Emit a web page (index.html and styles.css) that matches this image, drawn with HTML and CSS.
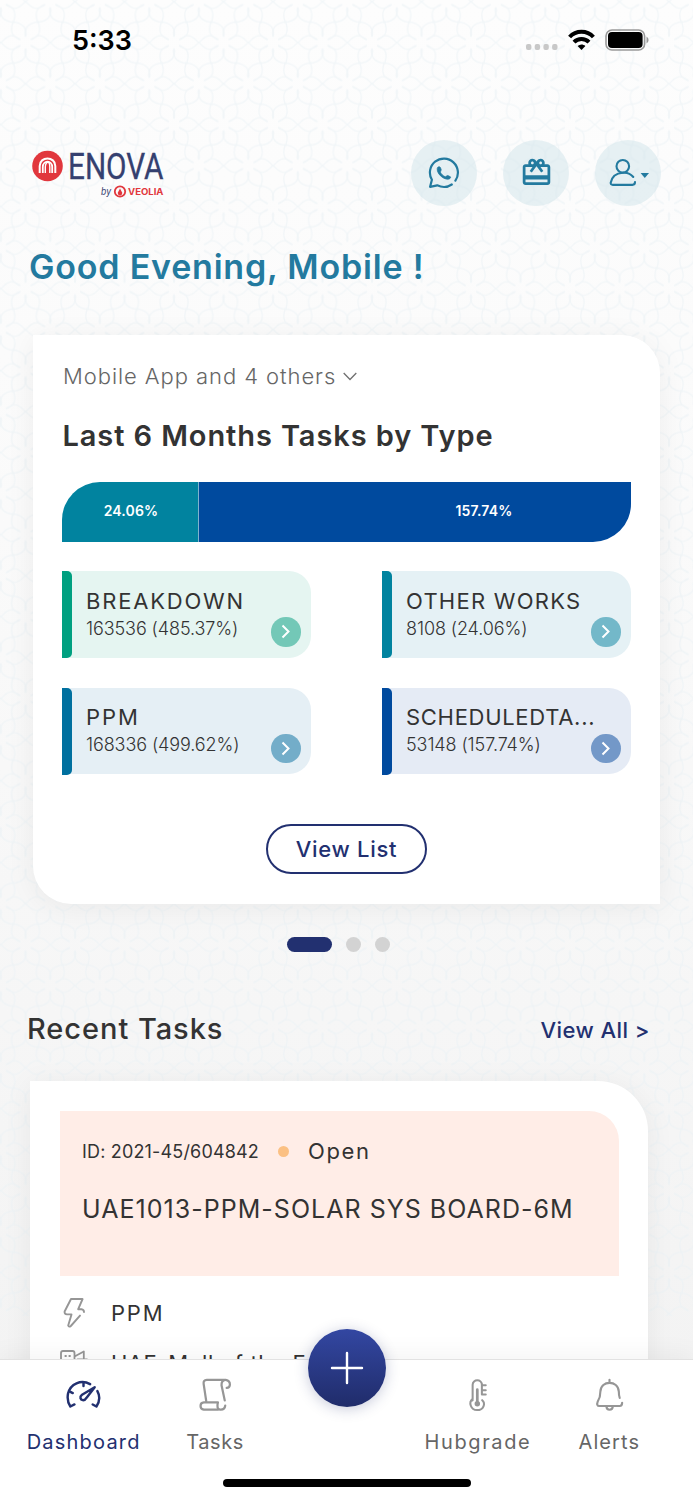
FILE: index.html
```html
<!DOCTYPE html>
<html lang="en">
<head>
    <meta charset="UTF-8">
    <meta name="viewport" content="width=device-width, initial-scale=1.0">
    <title>Enova Dashboard</title>
    <link rel="stylesheet" href="styles.css">
</head>
<body>
    <div class="screen">
        <svg class="pattern" width="693" height="1316">
            <defs>
                <path id="petal" d="M5 -3 C9 -3 9 -6.8 13.5 -6.8 C19 -6.8 21 -3 24.7 0 C21 3 19 6.8 13.5 6.8 C9 6.8 9 3 5 3"/>
                <g id="flower">
                    <use href="#petal"/>
                    <use href="#petal" transform="rotate(59)"/>
                    <use href="#petal" transform="rotate(121)"/>
                    <use href="#petal" transform="rotate(180)"/>
                    <use href="#petal" transform="rotate(239)"/>
                    <use href="#petal" transform="rotate(301)"/>
                </g>
                <pattern id="tiles" x="0.8" y="1.6" width="49.5" height="82" patternUnits="userSpaceOnUse">
                    <g class="lines">
                        <use href="#flower"/>
                        <use href="#flower" x="49.5"/>
                        <use href="#flower" y="82"/>
                        <use href="#flower" x="49.5" y="82"/>
                        <use href="#flower" x="24.75" y="41"/>
                    </g>
                </pattern>
            </defs>
            <rect width="693" height="1316" fill="url(#tiles)"/>
        </svg>

        <div class="status-bar">
            <span class="time">5:33</span>
            <div class="status-icons">
                <svg width="32" height="6" viewBox="0 0 32 6" fill="#c8c8c8">
                    <rect width="5.4" height="6" rx="2"/>
                    <rect x="8.7" width="5.4" height="6" rx="2"/>
                    <rect x="17.4" width="5.4" height="6" rx="2"/>
                    <rect x="26.1" width="5.4" height="6" rx="2"/>
                </svg>
                <svg class="wifi" width="27" height="22" viewBox="0 0 27 22" fill="none" stroke="#000" stroke-width="4">
                    <path d="M1.6 8 C8 0.9 19 0.9 25.4 8"/>
                    <path d="M6 13.2 C10 9 17 9 21 13.2"/>
                    <path d="M9.6 17 C12 15 15 15 17.4 17 L13.5 21 Z" fill="#000" stroke="none"/>
                </svg>
                <svg class="battery" width="44" height="22" viewBox="0 0 44 22">
                    <rect x="1" y="1" width="38.6" height="20" rx="6" fill="none" stroke="#999" stroke-width="1.6"/>
                    <rect x="3" y="3" width="34.6" height="16" rx="4" fill="#000"/>
                    <path d="M41.5 7.5 Q43.6 8.6 43.6 11 Q43.6 13.4 41.5 14.5 Z" fill="#999"/>
                </svg>
            </div>
        </div>

        <div class="header">
            <svg class="logo" width="140" height="60" viewBox="0 -10 140 60">
                <circle cx="15.5" cy="16" r="15.3" fill="#e1373d"/>
                <g fill="none" stroke="#fff">
                    <path d="M7.7 23 V16 C7.7 6 23.3 6 23.3 16 V23" stroke-width="2"/>
                    <path d="M10.8 23 V17 C10.8 10 20.2 10 20.2 17 V23" stroke-width="1.8"/>
                    <path d="M13.3 23 V17 Q13.6 12.5 16 12 Q17.8 12.5 17.8 17 V23" stroke-width="1.4"/>
                </g>
                <text class="logo-name" x="36" y="28.5" textLength="95.5" lengthAdjust="spacingAndGlyphs">ENOVA</text>
                <text class="logo-by" x="69" y="45" textLength="10" lengthAdjust="spacingAndGlyphs">by</text>
                <circle cx="88" cy="41.5" r="5.2" fill="none" stroke="#e1373d" stroke-width="1.8"/>
                <path d="M88 38.5 L90 42.3 A2.2 2.2 0 1 1 86 42.3 Z" fill="#e1373d"/>
                <text class="logo-veolia" x="96" y="44.7" textLength="35.5" lengthAdjust="spacingAndGlyphs">VEOLIA</text>
            </svg>
            <div class="header-buttons">
                <div class="round-btn">
                    <svg width="32" height="32" viewBox="0 0 32 32" fill="none" stroke="#237a9f" stroke-width="2.2" stroke-linecap="round" stroke-linejoin="round">
                        <path d="M27.4 23.6 A14 14 0 1 0 3.9 22.8 L2.1 29.8 L9.2 28.3 C14 30.6 19.5 30.4 23.8 27.5"/>
                        <path d="M9.6 10.5 C10.4 9.2 11.9 9.4 12.5 10.8 L13.2 12.8 C13.2 14 12.2 14.4 12.4 15.2 C13.4 17.3 15.2 19 17.3 19.8 C18.3 19.7 18.8 18.4 19.9 18.6 L22.4 19.8 C23.2 21 21.4 22.2 19.9 22.2 C14.3 22 9 16.5 9.2 12 Z" fill="#237a9f" stroke="#237a9f" stroke-width="0.8"/>
                    </svg>
                </div>
                <div class="round-btn">
                    <svg width="33" height="33" viewBox="0 0 24 24" fill="#237a9f">
                        <path d="M20 6h-2.18c.11-.31.18-.65.18-1 0-1.66-1.34-3-3-3-1.05 0-1.96.54-2.5 1.35l-.5.67-.5-.68C10.96 2.54 10.05 2 9 2 7.34 2 6 3.34 6 5c0 .35.07.69.18 1H4c-1.11 0-1.99.89-1.99 2L2 19c0 1.11.89 2 2 2h16c1.11 0 2-.89 2-2V8c0-1.11-.89-2-2-2zm-5-2c.55 0 1 .45 1 1s-.45 1-1 1-1-.45-1-1 .45-1 1-1zM9 4c.55 0 1 .45 1 1s-.45 1-1 1-1-.45-1-1 .45-1 1-1zm11 15H4v-2h16v2zm0-5H4V8h5.08L7 10.83 8.62 12 11 8.76l1-1.36 1 1.36L15.38 12 17 10.83 14.92 8H20v6z"/>
                    </svg>
                </div>
                <div class="round-btn">
                    <svg width="42" height="30" viewBox="0 0 42 30" fill="none" stroke="#237a9f" stroke-width="2.1" stroke-linecap="round">
                        <circle cx="15.8" cy="8.3" r="6.3"/>
                        <path d="M26.3 19 C23.5 15.5 20 14.3 15.8 14.8 C8.5 15.3 4.7 19.5 3.7 24.8 Q3.6 26.9 5.8 26.9 H25.4 Q28 26.9 28 24.1"/>
                        <path d="M33.6 15 H42 L37.8 20 Z" fill="#237a9f" stroke="none"/>
                    </svg>
                </div>
            </div>
        </div>

        <h1 class="greeting">Good Evening, Mobile !</h1>

        <div class="card tasks-card">
            <div class="site-select">
                <span class="site-name">Mobile App and 4 others</span>
                <svg width="14" height="9" viewBox="0 0 14 9" fill="none" stroke="#707070" stroke-width="1.3">
                    <path d="M0.7 1 L7 7.5 L13.3 1"/>
                </svg>
            </div>
            <h2 class="card-title">Last 6 Months Tasks by Type</h2>
            <div class="bar">
                <div class="bar-part teal"><span>24.06%</span></div>
                <div class="bar-part blue"><span>157.74%</span></div>
            </div>
            <div class="types">
                <div class="type breakdown">
                    <div class="type-name n1">BREAKDOWN</div>
                    <div class="type-value">163536 (485.37%)</div>
                    <div class="arrow"><svg width="9" height="15" viewBox="0 0 9 15"><path d="M1.5 1.5 L7.5 7.5 L1.5 13.5"/></svg></div>
                </div>
                <div class="type other">
                    <div class="type-name n2">OTHER WORKS</div>
                    <div class="type-value">8108 (24.06%)</div>
                    <div class="arrow"><svg width="9" height="15" viewBox="0 0 9 15"><path d="M1.5 1.5 L7.5 7.5 L1.5 13.5"/></svg></div>
                </div>
                <div class="type ppm">
                    <div class="type-name n3">PPM</div>
                    <div class="type-value">168336 (499.62%)</div>
                    <div class="arrow"><svg width="9" height="15" viewBox="0 0 9 15"><path d="M1.5 1.5 L7.5 7.5 L1.5 13.5"/></svg></div>
                </div>
                <div class="type scheduled">
                    <div class="type-name n4">SCHEDULEDTA...</div>
                    <div class="type-value">53148 (157.74%)</div>
                    <div class="arrow"><svg width="9" height="15" viewBox="0 0 9 15"><path d="M1.5 1.5 L7.5 7.5 L1.5 13.5"/></svg></div>
                </div>
            </div>
            <button class="view-list">View List</button>
        </div>

        <div class="dots">
            <span class="dot active"></span>
            <span class="dot"></span>
            <span class="dot"></span>
        </div>

        <div class="section-head">
            <h2 class="section-title">Recent Tasks</h2>
            <a class="view-all">View All &gt;</a>
        </div>

        <div class="card recent-card">
            <div class="task-box">
                <div class="task-meta">
                    <span class="task-id">ID: 2021-45/604842</span>
                    <span class="task-dot"></span>
                    <span class="task-status">Open</span>
                </div>
                <div class="task-name">UAE1013-PPM-SOLAR SYS BOARD-6M</div>
            </div>
            <div class="task-row">
                <svg width="30" height="32" viewBox="0 0 30 32" fill="none" stroke="#969696" stroke-width="1.9" stroke-linecap="round" stroke-linejoin="round">
                    <path d="M24 15 Q24 12.5 21.5 12.2 H18.2 L22.6 2 H11 L4.6 14.5 Q4.3 17.2 7 17.4 H11.5 L8.2 28.5 Q9 30.5 10.8 29 L20 18.6"/>
                </svg>
                <span class="row-ppm">PPM</span>
            </div>
            <div class="task-row">
                <svg width="30" height="32" viewBox="0 0 30 32" fill="none" stroke="#969696" stroke-width="1.8" stroke-linecap="round" stroke-linejoin="round">
                    <path d="M1 24 V6 Q1 4 3 4 H12.5 Q14.5 4 14.5 6 V24 M14.5 9.5 L23.8 4.5 V11 M17.5 12.3 H27 V24"/>
                    <path d="M5.3 9 H6 M9.3 9 H10 M5.3 14 H6 M9.3 14 H10"/>
                </svg>
                <span class="row-place">UAE-Mall of the Emirates</span>
            </div>
        </div>

        <div class="tab-bar">
            <div class="tab active">
                <svg width="35" height="35" viewBox="0 0 36 36" fill="none" stroke="#223070" stroke-width="2.5" stroke-linecap="round" stroke-linejoin="round">
                    <path d="M24.8 6.3 C15.5 1.2 4.5 6 2.1 16 C1.2 20.5 2 25.5 4.5 29.3 L8.7 27.2 M32.3 13.5 C35 18.5 34.5 24.5 31.3 29.3 L27.5 27.2"/>
                    <path d="M18 4.5 V8.3 M3.6 13.8 L7 15.5"/>
                    <path d="M29.5 9.5 L16.5 17.2 C13.5 19.5 15 22.5 17.2 22.8 C19 23 20.2 22 21.2 20.2 Z"/>
                </svg>
                <span class="t1">Dashboard</span>
            </div>
            <div class="tab">
                <svg width="35" height="35" viewBox="0 0 36 36" fill="none" stroke="#969696" stroke-width="2.3" stroke-linecap="round" stroke-linejoin="round">
                    <path d="M8.5 24 L5.8 6 Q5.3 2.2 9 2 H28.5 Q33 3 32.8 7 Q32.4 10.3 29.5 10.2 M27.5 23 L24.2 7.5 Q24 2.5 28 2"/>
                    <path d="M21 32.5 H6 Q2.6 32 2.6 28.7 Q2.6 25.2 6 25 H20.5 Q18.8 32 22.5 32.5 Q27.5 33 28 28.5"/>
                </svg>
                <span class="t2">Tasks</span>
            </div>
            <div class="tab-gap"></div>
            <div class="tab">
                <svg width="35" height="35" viewBox="0 0 36 36" fill="none" stroke="#969696" stroke-width="2.1" stroke-linecap="round">
                    <path d="M13 23 V7 C13 0.8 22.5 0.8 22.5 7 V10 M13 21.5 C8.5 25 11 33 17.5 33 C24.5 33 26.5 26 22.8 22.8 M22.5 7.5 H26.5 M22.5 12.5 H26.5 M22.5 17 H26.5 M22.5 6 V17"/>
                    <path d="M17.8 12 V26" stroke-width="2.8"/>
                    <circle cx="17.8" cy="26.5" r="2.8" fill="#969696" stroke="none"/>
                </svg>
                <span class="t3">Hubgrade</span>
            </div>
            <div class="tab">
                <svg width="35" height="35" viewBox="0 0 36 36" fill="none" stroke="#969696" stroke-width="2.2" stroke-linecap="round" stroke-linejoin="round">
                    <path d="M18 1.8 V5 M28.5 20.5 Q27.6 18.5 27.6 14 C27 2 9 2 8.6 14 C8.8 19 7.8 21 5.8 24.5 C4.8 27 5.5 28.8 7.5 28.8 H28.5 Q31 28.8 31 25.5 M14.8 29 C15 33.8 21.2 33.8 21.4 29"/>
                </svg>
                <span class="t4">Alerts</span>
            </div>
            <div class="fab">
                <svg width="34" height="34" viewBox="0 0 34 34" stroke="#fff" stroke-width="2.4" stroke-linecap="round">
                    <path d="M17 2 V32 M2 17 H32"/>
                </svg>
            </div>
            <div class="home-line"></div>
        </div>
    </div>
</body>
</html>
```

FILE: styles.css
```css
* {
    box-sizing: border-box;
}
body {
    margin: 0;
    font-family: Inter, "Open Sans", sans-serif;
    color: #333;
}
h1, h2 {
    margin: 0;
}
svg {
    display: block;
    flex-shrink: 0;
}
span, div, h1, h2, button {
    white-space: nowrap;
}
.screen {
    position: relative;
    width: 693px;
    height: 1500px;
    overflow: hidden;
    background: linear-gradient(#fdfdfd, #fafafa 35%, #f2f2f2);
}
.pattern {
    position: absolute;
    top: 0;
    left: 0;
}
.lines {
    fill: none;
    stroke: #e9f1f5;
    stroke-width: 1.3;
    opacity: 0.55;
}

/* status bar */
.status-bar {
    position: relative;
    display: flex;
    justify-content: space-between;
    height: 79px;
    padding: 0 44px 0 72px;
    align-items: center;
}
.time {
    padding-top: 1px;
    font-size: 27px;
    font-weight: 600;
    color: #000;
}
.status-icons {
    display: flex;
    align-items: center;
}
.status-icons svg:first-child {
    margin-top: 14px;
}
.wifi {
    margin: 0 10px 0 10px;
}

/* header */
.header {
    position: relative;
    display: flex;
    justify-content: space-between;
    padding: 60.5px 32px 0;
}
.logo {
    margin-top: 0.5px;
}
.logo-name {
    font-family: Roboto, sans-serif;
    font-size: 36px;
    fill: #35406f;
    stroke: #35406f;
    stroke-width: 0.3;
}
.logo-by {
    font-size: 10px;
    font-style: italic;
    fill: #35406f;
}
.logo-veolia {
    font-size: 8.5px;
    font-weight: 700;
    fill: #e1373d;
}
.header-buttons {
    display: flex;
    gap: 26px;
}
.round-btn {
    width: 66px;
    height: 66px;
    border-radius: 50%;
    background: rgba(211, 230, 235, 0.55);
    display: flex;
    align-items: center;
    justify-content: center;
}
.greeting {
    position: relative;
    margin: 41.5px 0 0 29px;
    font-size: 34px;
    line-height: 40px;
    font-weight: 600;
    letter-spacing: 0.8px;
    color: #237a9f;
}

/* main card */
.card {
    position: relative;
    background: #fff;
    box-shadow: 0 4px 30px rgba(0, 0, 0, 0.06);
}
.tasks-card {
    width: 627px;
    height: 569px;
    margin: 48px 0 0 33px;
    padding: 26px 29px 0;
    border-radius: 0 38px 0 38px;
}
.site-select {
    display: flex;
    align-items: center;
    gap: 7px;
    height: 30px;
    padding-left: 1px;
    font-size: 22px;
    font-weight: 300;
    letter-spacing: 0.93px;
    color: #666;
}
.card-title {
    margin-top: 25px;
    padding-left: 0.5px;
    font-size: 29px;
    line-height: 40px;
    font-weight: 600;
    letter-spacing: 0.9px;
}
.bar {
    display: flex;
    height: 60px;
    margin-top: 26px;
    border-radius: 38px 0 38px 0;
    overflow: hidden;
}
.bar-part {
    display: flex;
    align-items: center;
    justify-content: center;
    padding-bottom: 3px;
    color: #fff;
    font-size: 14px;
    font-weight: 600;
    letter-spacing: 0.15px;
}
.teal {
    width: 137px;
    padding-left: 2px;
    background: #01839f;
    border-right: 1px solid #7fb3cf;
}
.blue {
    flex: 1;
    padding-left: 138px;
    background: #004a9e;
}
.types {
    display: grid;
    grid-template-columns: 249px 249px;
    justify-content: space-between;
    row-gap: 30px;
    margin-top: 29px;
}
.type {
    position: relative;
    height: 86.5px;
    padding: 14.5px 0 0 24px;
    border-radius: 0 22px 22px 0;
}
.type::before {
    content: "";
    position: absolute;
    left: 0;
    top: 0;
    width: 9.5px;
    height: 87px;
    border-radius: 0 5px 5px 0;
}
.type-name {
    font-size: 22px;
    line-height: 30px;
    font-weight: 400;
}
.n1 { letter-spacing: 1.8px; }
.n2 { letter-spacing: 1.25px; }
.n3 { letter-spacing: 2px; }
.n4 { letter-spacing: 0.7px; }
.type-value {
    font-size: 18px;
    line-height: 26px;
    font-weight: 300;
    letter-spacing: -0.1px;
}
.arrow {
    position: absolute;
    right: 10.5px;
    bottom: 11px;
    width: 29.5px;
    height: 29.5px;
    border-radius: 50%;
    display: flex;
    align-items: center;
    justify-content: center;
}
.arrow path {
    fill: none;
    stroke: #fff;
    stroke-width: 2;
}
.breakdown { background: #e5f5f1; }
.breakdown::before { background: #00a080; }
.breakdown .arrow { background: #73c8b7; }
.other { background: #e5f1f5; }
.other::before { background: #01839f; }
.other .arrow { background: #73b8c9; }
.ppm { background: #e5eff5; }
.ppm::before { background: #00709f; }
.ppm .arrow { background: #73adc9; }
.scheduled { background: #e5ebf5; }
.scheduled::before { background: #004a9e; }
.scheduled .arrow { background: #7398c8; }
.view-list {
    display: block;
    width: 161px;
    height: 50px;
    margin: 50px auto 0;
    padding: 0;
    border: 2px solid #223070;
    border-radius: 25px;
    background: #fff;
    color: #223070;
    font-family: inherit;
    font-size: 22px;
    font-weight: 450;
    letter-spacing: 0.7px;
}

.dots {
    position: relative;
    display: flex;
    gap: 14px;
    margin: 33px 0 0 287px;
}
.dot {
    width: 15px;
    height: 15px;
    border-radius: 8px;
    background: #d3d3d3;
}
.dot.active {
    width: 45px;
    background: #223070;
}

/* recent tasks */
.section-head {
    position: relative;
    display: flex;
    justify-content: space-between;
    align-items: center;
    height: 40px;
    margin-top: 56px;
    padding: 0 43px 0 27px;
}
.section-title {
    font-size: 29px;
    font-weight: 450;
    letter-spacing: 0.95px;
}
.view-all {
    margin-top: 3px;
    font-size: 22px;
    font-weight: 450;
    letter-spacing: 0.45px;
    color: #223070;
}
.recent-card {
    width: 618px;
    height: 500px;
    margin: 33px 0 0 30px;
    padding: 30px 30px 0;
    border-radius: 0 50px 0 0;
}
.task-box {
    width: 558.5px;
    height: 165px;
    padding: 25px 22px 0;
    background: #ffede7;
    border-radius: 0 30px 0 0;
}
.task-meta {
    display: flex;
    align-items: center;
    height: 30px;
}
.task-id {
    font-size: 18px;
    letter-spacing: 0.17px;
}
.task-dot {
    width: 11px;
    height: 11px;
    margin: 0 19px;
    border-radius: 50%;
    background: #fbc083;
}
.task-status {
    font-size: 22px;
    letter-spacing: 1.6px;
}
.task-name {
    margin-top: 23px;
    font-size: 25px;
    line-height: 40px;
    letter-spacing: 1.03px;
}
.task-row {
    display: flex;
    align-items: center;
    gap: 21px;
    height: 50px;
    font-size: 22px;
}
.task-row:nth-child(2) {
    margin-top: 12px;
}
.row-ppm {
    letter-spacing: 1.8px;
}
.row-place {
    letter-spacing: 0.7px;
}

/* bottom tabs */
.tab-bar {
    position: absolute;
    left: 0;
    bottom: 0;
    width: 693px;
    height: 141px;
    padding: 0 18px;
    display: flex;
    background: #fff;
    border-top: 1px solid #e2e2e2;
    box-shadow: 0 -4px 24px rgba(0, 0, 0, 0.05);
}
.tab, .tab-gap {
    flex: 1;
}
.tab {
    display: flex;
    flex-direction: column;
    align-items: center;
    padding-top: 17.5px;
    font-size: 20px;
    line-height: 26px;
    color: #666;
}
.tab span {
    margin-top: 16.5px;
}
.t1 { letter-spacing: 1.2px; }
.t2 { letter-spacing: 0.6px; }
.t3 { letter-spacing: 1.6px; }
.t4 { letter-spacing: 1.1px; }
.tab.active {
    color: #223070;
}
.fab {
    position: absolute;
    left: 307.5px;
    top: -31.5px;
    width: 78px;
    height: 78px;
    border-radius: 50%;
    background: linear-gradient(#3347a2, #202c6a);
    box-shadow: 0 2px 14px rgba(34, 48, 112, 0.25);
    display: flex;
    align-items: center;
    justify-content: center;
}
.home-line {
    position: absolute;
    left: 223px;
    bottom: 13px;
    width: 248px;
    height: 8px;
    border-radius: 4px;
    background: #000;
}
```
